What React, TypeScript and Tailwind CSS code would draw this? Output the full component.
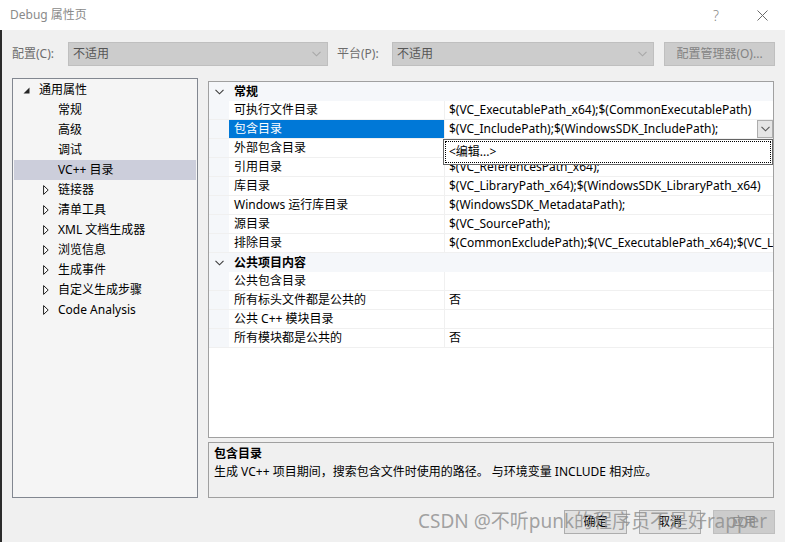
import type { ReactNode } from 'react';

function cx(...parts: (string | false | undefined)[]) {
  return parts.filter(Boolean).join(' ');
}

function Chevron({ className }: { className?: string }) {
  return (
    <svg width="9" height="6" viewBox="0 0 9 6" className={className}>
      <polyline points="0.5,0.8 4.5,4.8 8.5,0.8" fill="none" stroke="currentColor" strokeWidth="1.1" />
    </svg>
  );
}

function Expanded() {
  return (
    <svg width="7" height="7" viewBox="0 0 7 7">
      <polygon points="6.5,0.5 6.5,6.5 0.5,6.5" fill="#262626" />
    </svg>
  );
}

function Collapsed() {
  return (
    <svg width="6" height="10" viewBox="0 0 6 10">
      <polygon points="0.6,0.6 5.2,5 0.6,9.4" fill="white" stroke="#1e1e1e" strokeWidth="1" />
    </svg>
  );
}

function Select({ width }: { width: string }) {
  return (
    <div className={cx('flex h-[24px] shrink-0 items-center justify-between border border-[#bfbfbf] bg-[#cccccc] pl-[4px] pr-[6px] text-[#555]', width)}>
      <span>不适用</span>
      <Chevron className="text-[#a8a8a8]" />
    </div>
  );
}

const treeItems: { label: string; kind: 'open' | 'leaf' | 'closed'; selected?: boolean }[] = [
  { label: '通用属性', kind: 'open' },
  { label: '常规', kind: 'leaf' },
  { label: '高级', kind: 'leaf' },
  { label: '调试', kind: 'leaf' },
  { label: 'VC++ 目录', kind: 'leaf', selected: true },
  { label: '链接器', kind: 'closed' },
  { label: '清单工具', kind: 'closed' },
  { label: 'XML 文档生成器', kind: 'closed' },
  { label: '浏览信息', kind: 'closed' },
  { label: '生成事件', kind: 'closed' },
  { label: '自定义生成步骤', kind: 'closed' },
  { label: 'Code Analysis', kind: 'closed' }
];

type Row = { cat?: boolean; name: string; value?: string; selected?: boolean };

const rows: Row[] = [
  { cat: true, name: '常规' },
  { name: '可执行文件目录', value: '$(VC_ExecutablePath_x64);$(CommonExecutablePath)' },
  { name: '包含目录', value: '$(VC_IncludePath);$(WindowsSDK_IncludePath);', selected: true },
  { name: '外部包含目录', value: '$(VC_IncludePath);$(WindowsSDK_IncludePath);' },
  { name: '引用目录', value: '$(VC_ReferencesPath_x64);' },
  { name: '库目录', value: '$(VC_LibraryPath_x64);$(WindowsSDK_LibraryPath_x64)' },
  { name: 'Windows 运行库目录', value: '$(WindowsSDK_MetadataPath);' },
  { name: '源目录', value: '$(VC_SourcePath);' },
  { name: '排除目录', value: '$(CommonExcludePath);$(VC_ExecutablePath_x64);$(VC_LibraryPath_x64)' },
  { cat: true, name: '公共项目内容' },
  { name: '公共包含目录', value: '' },
  { name: '所有标头文件都是公共的', value: '否' },
  { name: '公共 C++ 模块目录', value: '' },
  { name: '所有模块都是公共的', value: '否' }
];

function TreeRow({ label, kind, selected }: { label: string; kind: string; selected?: boolean }) {
  return (
    <div className={cx('mx-[1px] flex h-[20px] items-center', selected && 'bg-[#cccedb]')}>
      {kind === 'open' ? (
        <>
          <span className="ml-[9px] flex w-[16px]"><Expanded /></span>
          <span>{label}</span>
        </>
      ) : (
        <>
          <span className="ml-[29px] flex w-[15px]">{kind === 'closed' ? <Collapsed /> : null}</span>
          <span>{label}</span>
        </>
      )}
    </div>
  );
}

function GridRow({ row }: { row: Row }) {
  if (row.cat) {
    return (
      <div className="flex h-[19px] items-center bg-[#f5f7fa]">
        <Chevron className="ml-[6px] text-[#3c3c3c]" />
        <span className="ml-[10px] font-bold">{row.name}</span>
      </div>
    );
  }
  return (
    <div className="flex h-[19px] border-b border-[#f0f0f0]">
      <div className="w-[20px] shrink-0 bg-[#f5f7fa]" />
      <div className={cx('w-[216px] shrink-0 border-r border-[#f0f0f0] pl-[5px] leading-[18px]', row.selected ? 'bg-[#0078d7] text-white' : 'bg-white')}>
        {row.name}
      </div>
      <div className="flex min-w-0 flex-1 items-center overflow-hidden bg-white">
        <span className="flex-1 overflow-hidden whitespace-nowrap pl-[4px] leading-[18px]">{row.value}</span>
        {row.selected ? (
          <span className="flex h-[18px] w-[16px] shrink-0 items-center justify-center border border-[#adadad] bg-[#e5e5e5]">
            <Chevron className="text-[#555]" />
          </span>
        ) : null}
      </div>
    </div>
  );
}

function Btn({ children, disabled }: { children: ReactNode; disabled?: boolean }) {
  return (
    <div
      className={cx(
        'flex h-[24px] items-center justify-center border',
        disabled ? 'border-[#bfbfbf] bg-[#cccccc] text-[#838383]' : 'border-[#adadad] bg-[#e1e1e1] text-black'
      )}
    >
      {children}
    </div>
  );
}

export default function App() {
  return (
    <div className="relative flex h-[542px] w-[785px] flex-col overflow-hidden bg-[#f0f0f0] font-['Noto_Sans','Noto_Sans_CJK_SC',sans-serif] text-[12px] text-black">
      {/* title bar */}
      <div className="flex h-[30px] shrink-0 items-center bg-white pl-[10px] text-[#8a8a8a]">
        <span className="flex-1">Debug 属性页</span>
        <span className="mr-[38px] text-[14px] font-light">?</span>
        <svg width="11" height="11" viewBox="0 0 11 11" className="mr-[17px]">
          <path d="M0.5 0.5 L10.5 10.5 M10.5 0.5 L0.5 10.5" stroke="#6a6a6a" strokeWidth="1" />
        </svg>
      </div>

      <div className="flex flex-1 flex-col border-l-2 border-[#2b2b2b] pl-[10px]">
        {/* config bar */}
        <div className="mt-[12px] flex h-[24px] items-center text-[#6d6d6d]">
          <span className="w-[56px] shrink-0">配置(C):</span>
          <Select width="w-[260px]" />
          <span className="ml-[9px] w-[55px] shrink-0">平台(P):</span>
          <Select width="w-[262px]" />
          <div className="ml-[10px] flex h-[24px] w-[111px] shrink-0 items-center justify-center border border-[#bfbfbf] bg-[#cccccc] text-[#838383]">
            配置管理器(O)...
          </div>
        </div>

        {/* main */}
        <div className="mt-[12px] flex">
          <div className="h-[420px] w-[186px] shrink-0 border border-[#828790] bg-[#f5f5f5] pt-[1px]">
            {treeItems.map((t) => (
              <TreeRow key={t.label} label={t.label} kind={t.kind} selected={t.selected} />
            ))}
          </div>

          <div className="ml-[10px] flex w-[566px] shrink-0 flex-col">
            <div className="relative mt-[3px] h-[357px] border border-[#a0a0a0] bg-white">
              {rows.map((r) => (
                <GridRow key={r.name} row={r} />
              ))}
              <div className="absolute left-[234px] top-[57px] h-[26px] w-[330px] border border-[#646464] bg-white p-[1px]">
                <div className="h-full border border-dotted border-black pl-[3px] leading-[20px]">&lt;编辑...&gt;</div>
              </div>
            </div>
            <div className="mt-[4px] h-[56px] border border-[#a0a0a0] px-[5px] pt-[2px]">
              <div className="font-bold leading-[18px]">包含目录</div>
              <div className="leading-[17px]">生成 VC++ 项目期间，搜索包含文件时使用的路径。 与环境变量 INCLUDE 相对应。</div>
            </div>
          </div>
        </div>

        {/* footer buttons */}
        <div className="mt-[12px] flex justify-end gap-[12px] pr-[10px]">
          <div className="w-[63px]"><Btn>确定</Btn></div>
          <div className="w-[62px]"><Btn>取消</Btn></div>
          <div className="w-[62px]"><Btn disabled>应用</Btn></div>
        </div>
      </div>

      <div className="pointer-events-none absolute left-[418px] top-[507px] whitespace-nowrap text-[19px] text-[#8c8c8c]/80">
        CSDN @不听punk的程序员不是好rapper
      </div>
    </div>
  );
}
